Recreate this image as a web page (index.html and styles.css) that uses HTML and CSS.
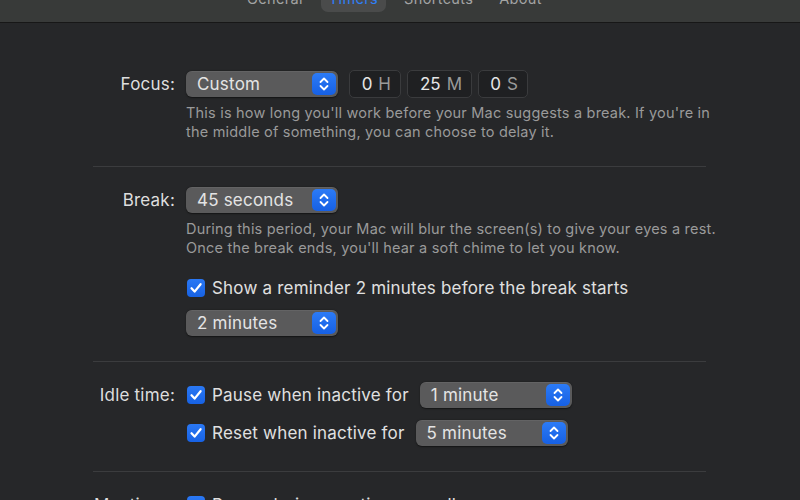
FILE: index.html
```html
<!DOCTYPE html>
<html>
<head>
<meta charset="utf-8">
<link rel="stylesheet" href="styles.css">
</head>
<body>
<div class="toolbar">
  <div class="tabs">
    <div class="tab">General</div>
    <div class="tab tab-active">Timers</div>
    <div class="tab">Shortcuts</div>
    <div class="tab">About</div>
  </div>
</div>

<div class="content">
  <section class="section section-first">
    <div class="label">Focus:</div>
    <div class="controls">
      <div class="row">
        <div class="popup"><span class="popup-value">Custom</span><span class="stepper"><svg width="24" height="22" viewBox="0 0 24 22"><path d="M8.5 9 L12 5.5 L15.5 9" /><path d="M8.5 13 L12 16.5 L15.5 13" /></svg></span></div>
        <div class="fields">
          <div class="field field-h"><span class="num">0</span><span class="unit">H</span></div>
          <div class="field field-m"><span class="num">25</span><span class="unit">M</span></div>
          <div class="field field-s"><span class="num">0</span><span class="unit">S</span></div>
        </div>
      </div>
      <p class="desc">This is how long you'll work before your Mac suggests a break. If you're in the middle of something, you can choose to delay it.</p>
    </div>
  </section>
  <hr class="sep">

  <section class="section">
    <div class="label">Break:</div>
    <div class="controls">
      <div class="row">
        <div class="popup"><span class="popup-value">45 seconds</span><span class="stepper"><svg width="24" height="22" viewBox="0 0 24 22"><path d="M8.5 9 L12 5.5 L15.5 9" /><path d="M8.5 13 L12 16.5 L15.5 13" /></svg></span></div>
      </div>
      <p class="desc">During this period, your Mac will blur the screen(s) to give your eyes a rest. Once the break ends, you'll hear a soft chime to let you know.</p>
      <div class="row row-check">
        <span class="checkbox"><svg width="18" height="18" viewBox="0 0 18 18"><path d="M4.5 9.2 L7.6 12.6 L13.6 5.2" /></svg></span>
        <span class="check-text">Show a reminder 2 minutes before the break starts</span>
      </div>
      <div class="row row-after-check">
        <div class="popup"><span class="popup-value">2 minutes</span><span class="stepper"><svg width="24" height="22" viewBox="0 0 24 22"><path d="M8.5 9 L12 5.5 L15.5 9" /><path d="M8.5 13 L12 16.5 L15.5 13" /></svg></span></div>
      </div>
    </div>
  </section>
  <hr class="sep">

  <section class="section">
    <div class="label">Idle time:</div>
    <div class="controls">
      <div class="row">
        <span class="checkbox"><svg width="18" height="18" viewBox="0 0 18 18"><path d="M4.5 9.2 L7.6 12.6 L13.6 5.2" /></svg></span>
        <span class="check-text">Pause when inactive for</span>
        <div class="popup popup-inline"><span class="popup-value">1 minute</span><span class="stepper"><svg width="24" height="22" viewBox="0 0 24 22"><path d="M8.5 9 L12 5.5 L15.5 9" /><path d="M8.5 13 L12 16.5 L15.5 13" /></svg></span></div>
      </div>
      <div class="row row-second">
        <span class="checkbox"><svg width="18" height="18" viewBox="0 0 18 18"><path d="M4.5 9.2 L7.6 12.6 L13.6 5.2" /></svg></span>
        <span class="check-text">Reset when inactive for</span>
        <div class="popup popup-inline"><span class="popup-value">5 minutes</span><span class="stepper"><svg width="24" height="22" viewBox="0 0 24 22"><path d="M8.5 9 L12 5.5 L15.5 9" /><path d="M8.5 13 L12 16.5 L15.5 13" /></svg></span></div>
      </div>
    </div>
  </section>
  <hr class="sep">

  <section class="section">
    <div class="label">Meetings:</div>
    <div class="controls">
      <div class="row">
        <span class="checkbox"><svg width="18" height="18" viewBox="0 0 18 18"><path d="M4.5 9.2 L7.6 12.6 L13.6 5.2" /></svg></span>
        <span class="check-text">Pause during meetings or calls</span>
      </div>
    </div>
  </section>
</div>
</body>
</html>
```

FILE: styles.css
```css
html, body {
  margin: 0;
  padding: 0;
  height: 100%;
  overflow: hidden;
}

body {
  background: #262729;
  font-family: Inter, "Liberation Sans", sans-serif;
  color: #dedede;
}

.toolbar {
  height: 22px;
  background: #383a39;
  border-bottom: 1px solid #171717;
  overflow: hidden;
}

.tabs {
  display: flex;
  gap: 10px;
  padding-left: 239px;
  margin-top: -17px;
}

.tab {
  height: 29px;
  box-sizing: border-box;
  padding: 7px 8px 0 8px;
  line-height: 17px;
  font-size: 14.5px;
  letter-spacing: 0.35px;
  color: #a3a4a4;
  border-radius: 7px;
}

.tab-active {
  color: #2f7ff7;
  background: #4a4b4b;
}

.content {
  display: flex;
  flex-direction: column;
}

.section {
  display: grid;
  grid-template-columns: 82px 1fr;
  column-gap: 11px;
  margin-left: 93px;
  width: 613px;
  padding: 20px 0 25px 0;
}

.section-first {
  padding-top: 48px;
}

.label {
  text-align: right;
  font-size: 17px;
  letter-spacing: 0.2px;
  line-height: 26px;
  height: 26px;
  color: #dedede;
  white-space: nowrap;
}

.controls {
  display: flex;
  flex-direction: column;
}

.row {
  display: flex;
  align-items: center;
  height: 26px;
}

.row-check {
  margin-top: 18px;
}

.row-after-check {
  margin-top: 9px;
}

.row-second {
  margin-top: 12px;
}

.popup {
  width: 152px;
  height: 26px;
  box-sizing: border-box;
  background: #5a5a5b;
  border-radius: 6px;
  box-shadow: inset 0 0.5px 0 rgba(255, 255, 255, 0.12), 0 0.5px 1.5px rgba(0, 0, 0, 0.5);
  display: flex;
  align-items: center;
  justify-content: space-between;
  padding: 0 2px 0 11px;
  flex-shrink: 0;
}

.popup-inline {
  margin-left: 11px;
}

.popup-value {
  font-size: 17px;
  letter-spacing: 0.2px;
  color: #e4e4e4;
  white-space: nowrap;
}

.stepper {
  width: 24px;
  height: 22px;
  border-radius: 5px;
  background: linear-gradient(#2c7bf6, #1660e4);
  display: flex;
}

.stepper path {
  fill: none;
  stroke: #ffffff;
  stroke-width: 1.8;
  stroke-linecap: round;
  stroke-linejoin: round;
}

.fields {
  display: flex;
  gap: 6px;
  margin-left: 11px;
}

.field {
  height: 28px;
  box-sizing: border-box;
  background: #1f2022;
  border: 1px solid #3a3b3d;
  border-radius: 5px;
  display: flex;
  align-items: center;
  justify-content: flex-end;
  padding-right: 9px;
  font-size: 17px;
  gap: 6px;
}

.field-h { width: 52px; }
.field-m { width: 65px; }
.field-s { width: 50px; }

.num { color: #e6e6e6; }
.unit { color: #9a9a9a; }

.desc {
  margin: 6px 0 0 0;
  font-size: 14.5px;
  letter-spacing: 0.2px;
  line-height: 19px;
  color: #9a9a9a;
  width: 545px;
}

.checkbox {
  width: 18px;
  height: 18px;
  margin-left: 1px;
  border-radius: 4px;
  background: linear-gradient(#2a78f4, #1762e4);
  display: flex;
  flex-shrink: 0;
}

.checkbox path {
  fill: none;
  stroke: #ffffff;
  stroke-width: 2.2;
  stroke-linecap: round;
  stroke-linejoin: round;
}

.check-text {
  margin-left: 7px;
  font-size: 17px;
  letter-spacing: 0.2px;
  color: #e0e0e0;
  white-space: nowrap;
}

.sep {
  margin: 0 0 0 93px;
  width: 613px;
  border: 0;
  height: 1px;
  background: #3b3c3e;
}
```
